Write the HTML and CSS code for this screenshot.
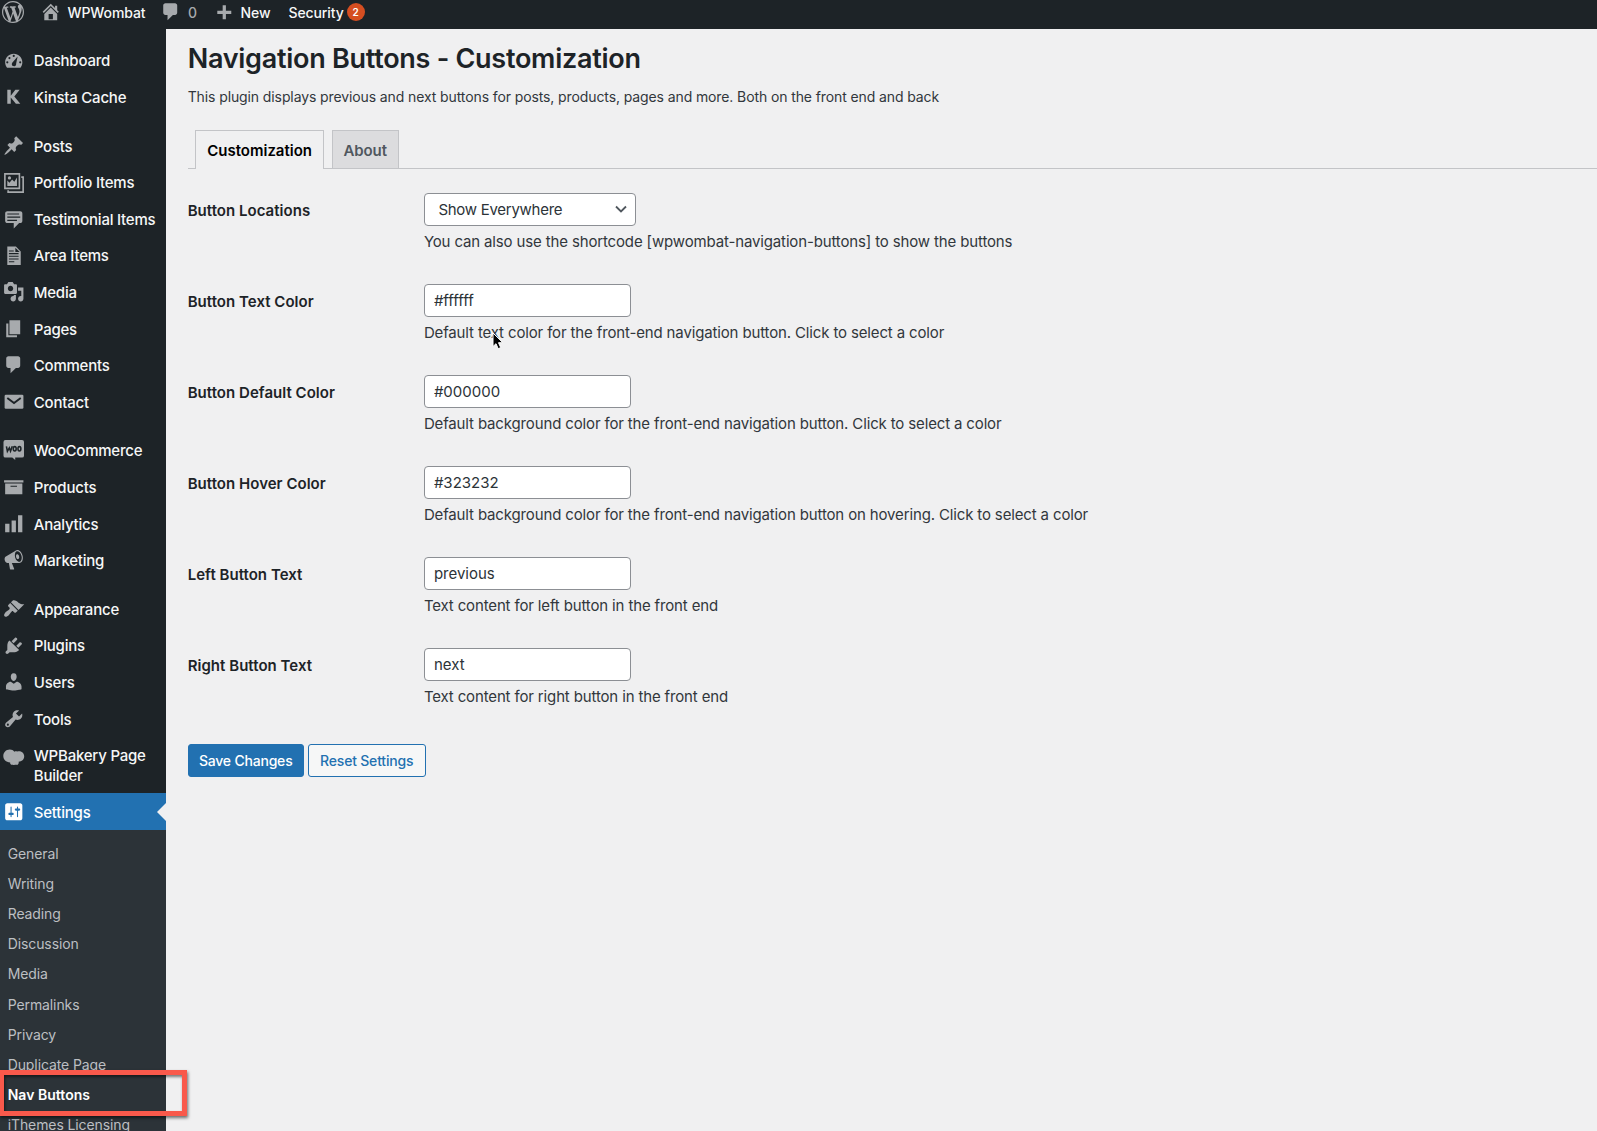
FILE: index.html
```html
<!DOCTYPE html>
<html lang="en">
<head>
<meta charset="utf-8">
<title>Navigation Buttons - Customization</title>
<link rel="stylesheet" href="styles.css">
</head>
<body>
<header class="adminbar">
  <svg class="icon wp-logo" viewBox="0 0 20 20"><path d="M20 10c0-5.51-4.49-10-10-10C4.48 0 0 4.49 0 10c0 5.52 4.48 10 10 10 5.51 0 10-4.48 10-10zM7.78 15.37L4.37 6.22c.55-.02 1.17-.08 1.17-.08.5-.06.44-1.13-.06-1.11 0 0-1.45.11-2.37.11-.18 0-.37 0-.58-.01C4.12 2.69 6.87 1.11 10 1.11c2.33 0 4.45.87 6.05 2.34-.68-.11-1.65.39-1.65 1.58 0 .74.45 1.36.9 2.1.35.61.55 1.36.55 2.46 0 1.49-1.4 5-1.4 5l-3.03-8.37c.54-.02.82-.17.82-.17.5-.05.44-1.25-.06-1.22 0 0-1.44.12-2.38.12-.87 0-2.33-.12-2.33-.12-.5-.03-.56 1.2-.06 1.22l.92.08 1.26 3.41zM17.41 10c.24-.64.74-1.87.43-4.25.7 1.29 1.05 2.71 1.05 4.25 0 3.29-1.73 6.24-4.4 7.78.97-2.59 1.94-5.2 2.92-7.78zM6.1 18.09C3.12 16.65 1.11 13.53 1.11 10c0-1.3.23-2.48.72-3.59C3.25 10.3 4.67 14.2 6.1 18.09zm4.03-6.63l2.58 6.98c-.86.29-1.76.45-2.71.45-.79 0-1.57-.11-2.29-.33.81-2.38 1.62-4.74 2.42-7.1z"/></svg>
  <a class="bar-item site"><svg class="icon" viewBox="0 0 20 20"><path d="M16 8.5l1.53 1.53-1.06 1.06L10 4.6l-6.47 6.49-1.06-1.06L10 2.5l4 4v-2h2v4zm-6-2.46l6 5.99V18H4v-5.97zM12 17v-5H8v5h4z"/></svg><span>WPWombat</span></a>
  <a class="bar-item replies"><svg class="icon" viewBox="0 0 20 20"><path d="M5 2h9c1.1 0 2 .9 2 2v7c0 1.1-.9 2-2 2h-2l-5 5v-5H5c-1.1 0-2-.9-2-2V4c0-1.1.9-2 2-2z"/></svg><span>0</span></a>
  <a class="bar-item new"><svg class="icon" viewBox="0 0 20 20"><path d="M17 9v3h-5v5H9v-5H4V9h5V4h3v5h5z"/></svg><span>New</span></a>
  <a class="bar-item security"><span>Security</span><b class="badge">2</b></a>
</header>
<div class="layout">
  <nav class="sidebar">
    <ul class="menu">
      <li><svg class="icon" viewBox="0 0 20 20"><path fill-rule="evenodd" d="M3.760 16.500h12.480c1.100-1.370 1.760-3.110 1.760-5 0-4.420-3.580-8-8-8s-8 3.580-8 8c0 1.890.66 3.630 1.760 5zM9 5.500a1 1 0 1 1 2 0 1 1 0 0 1-2 0zM5 7.500a1 1 0 1 1 2 0 1 1 0 0 1-2 0zM3 11.500a1 1 0 1 1 2 0 1 1 0 0 1-2 0zM15 11.500a1 1 0 1 1 2 0 1 1 0 0 1-2 0zM8.200 13.100c.1-.9.6-1.600 1.200-2.100l4.200-4.900-1.300 6.200c0 1.700-.4 2.400-1.300 2.800-1.400.5-3-.5-2.800-2z"/></svg><span>Dashboard</span></li>
      <li><svg class="icon" viewBox="0 0 20 20"><path d="M4 3.500h3.200v5.600L11.500 3.500h4l-5 6.200 5.600 6.900h-4.100L7.200 10.700v5.900H4z"/></svg><span>Kinsta Cache</span></li>
      <li class="group"><svg class="icon" viewBox="0 0 20 20"><path d="M10.440 3.020l1.820-1.820 6.360 6.350-1.830 1.820c-1.050-.68-2.480-.57-3.410.36l-.75.75c-.92.93-1.040 2.350-.35 3.410l-1.830 1.820-2.410-2.410-2.800 2.790c-.42.42-3.380 2.710-3.800 2.290s1.860-3.390 2.280-3.810l2.790-2.790L4.100 9.360l1.830-1.820c1.050.69 2.480.57 3.400-.36l.75-.75c.93-.92 1.050-2.350.36-3.410z"/></svg><span>Posts</span></li>
      <li><svg class="icon" viewBox="0 0 20 20"><path fill-rule="evenodd" d="M1 1h15v15H1zM2.500 2.500v12h12v-12zM17 4h2.500v15.500H4V17h1.500v1H18V5.500h-1z"/><path d="M4 13V8l2 2 2.500-3 2 2L13 5v8z"/><circle cx="6" cy="5.500" r="1.500"/></svg><span>Portfolio Items</span></li>
      <li><svg class="icon" viewBox="0 0 20 20"><path d="M4 3h12c.55 0 1.020.2 1.410.59S18 4.450 18 5v7c0 .55-.2 1.020-.59 1.410S16.550 14 16 14h-1l-5 5v-5H4c-.55 0-1.020-.2-1.410-.59S2 12.550 2 12V5c0-.55.2-1.020.59-1.410S3.450 3 4 3zm11 2H4v1h11V5zm1 3H4v1h12V8zm-3 3H4v1h9v-1z"/></svg><span>Testimonial Items</span></li>
      <li><svg class="icon" viewBox="0 0 20 20"><path fill-rule="evenodd" d="M4 1.500h8l4.500 4.500v12.500H4zM11.500 2.500V6.500H15.500zM5.500 5h4.500v1H5.500zM5.500 7.500h9v1h-9zM5.500 10h9v1h-9zM5.500 12.500h9v1h-9zM5.500 15h5v1h-5z"/></svg><span>Area Items</span></li>
      <li><svg class="icon" viewBox="0 0 20 20"><path d="M13 11V4c0-.55-.45-1-1-1h-1.670L9 1H5L3.670 3H2c-.55 0-1 .45-1 1v7c0 .55.45 1 1 1h10c.55 0 1-.45 1-1zM7 4.500c1.380 0 2.500 1.120 2.500 2.500S8.380 9.500 7 9.500 4.500 8.380 4.500 7 5.620 4.500 7 4.500zM14 6h5v10.500c0 1.380-1.120 2.500-2.500 2.500S14 17.880 14 16.500s1.120-2.500 2.500-2.500c.17 0 .34.020.5.050V9h-3V6zm-4 8.050V13h2v3.500c0 1.380-1.120 2.500-2.500 2.500S7 17.880 7 16.500 8.120 14 9.500 14c.17 0 .34.020.5.050z"/></svg><span>Media</span></li>
      <li><svg class="icon" viewBox="0 0 20 20"><path d="M6 15V2h10v13H6zm-1 1h8v2H3V5h2v11z"/></svg><span>Pages</span></li>
      <li><svg class="icon" viewBox="0 0 20 20"><path d="M5 2h9c1.100 0 2 .9 2 2v7c0 1.100-.9 2-2 2h-2l-5 5v-5H5c-1.100 0-2-.9-2-2V4c0-1.100.9-2 2-2z"/></svg><span>Comments</span></li>
      <li><svg class="icon" viewBox="0 0 20 20"><rect x="1.500" y="3.500" width="17.500" height="13" rx="1.200"/><path class="cut" d="M4 6.500l6.250 4.700 6.250-4.700"/></svg><span>Contact</span></li>
      <li class="group"><svg class="icon woo" viewBox="0 0 22 22"><path d="M2.500 0h17q2 0 2 2v14q0 2-2 2h-7v2.500L9.500 18h-7q-2 0-2-2V2q0-2 2-2z"/><path class="letters" d="M3.500 6.500l1 5 2-3.500 1.200 3.500L9.500 6.500"/><ellipse class="letters" cx="12" cy="9" rx="1.500" ry="2.200"/><ellipse class="letters" cx="16.800" cy="9" rx="1.500" ry="2.200"/></svg><span>WooCommerce</span></li>
      <li><svg class="icon" viewBox="0 0 20 20"><path d="M19 4v2H1V4h18zM2 7h16v10H2V7zm11 3V9H7v1h6z"/></svg><span>Products</span></li>
      <li><svg class="icon" viewBox="0 0 20 20"><path d="M18 18V2h-4v16h4zm-6 0V7H8v11h4zm-6 0v-8H2v8h4z"/></svg><span>Analytics</span></li>
      <li><svg class="icon" viewBox="0 0 20 20"><path d="M18.150 5.940c.46 1.620.38 3.220-.02 4.480-.42 1.280-1.260 2.180-2.300 2.480-.16.06-.26.06-.4.06-.06.02-.12.02-.18.02-.06.02-.14.02-.22.02h-6.800l2.220 5.500c.02.14-.06.26-.14.34-.08.1-.24.16-.34.16H6.950c-.1 0-.26-.06-.34-.16-.08-.08-.16-.2-.14-.34l-1-5.500H4.250l-.02-.02c-.5.06-1.080-.18-1.540-.62s-.88-1.080-1.060-1.880c-.24-.8-.2-1.560-.02-2.200.18-.62.58-1.080 1.060-1.300l.02-.02 9-5.400c.1-.06.18-.1.24-.16.06-.04.14-.08.24-.12.16-.08.28-.12.5-.18 1.040-.3 2.240.1 3.220.98s1.840 2.240 2.260 3.860zm-2.580 5.980h-.02c.4-.1.74-.34 1.040-.7.58-.7.86-1.760.86-3.040 0-.64-.1-1.300-.28-1.980-.34-1.360-1.020-2.500-1.780-3.240s-1.680-1.100-2.460-.88c-.82.22-1.400.96-1.700 2-.32 1.040-.28 2.360.06 3.720.38 1.360 1 2.500 1.800 3.240.78.74 1.620 1.100 2.480.88zm-2.540-7.080c.22-.04.42-.02.62.04.38.16.76.48 1.020 1s.42 1.200.42 1.780c0 .3-.04.56-.12.8-.18.48-.44.84-.86.94-.34.1-.8-.06-1.140-.4s-.64-.86-.78-1.500c-.18-.62-.12-1.240.02-1.720s.48-.84.82-.94z"/></svg><span>Marketing</span></li>
      <li class="group"><svg class="icon" viewBox="0 0 20 20"><path d="M14.480 11.060L7.410 3.990l1.500-1.500c.5-.56 2.300-.47 3.510.32 1.210.8 1.430 1.280 2.910 2.100 1.180.64 2.450 1.260 4.450.85zm-.71.71L6.700 4.700 4.930 6.470c-.39.39-.39 1.020 0 1.410l1.060 1.060c.39.39.39 1.030 0 1.420-.6.6-1.430 1.110-2.210 1.690-.35.26-.7.53-1.010.84C1.430 14.230.4 16.080 1.400 17.070c.99 1 2.840-.03 4.180-1.360.31-.31.58-.66.85-1.020.57-.78 1.080-1.610 1.690-2.210.39-.39 1.020-.39 1.410 0l1.060 1.060c.39.39 1.020.39 1.410 0z"/></svg><span>Appearance</span></li>
      <li><svg class="icon" viewBox="0 0 20 20"><path d="M13.110 4.360L9.870 7.600 8 5.730l3.240-3.240c.35-.34 1.050-.2 1.560.32.52.51.66 1.210.31 1.550zm-8 1.770l.91-1.120 9.010 9.010-1.190.84c-.71.71-2.630 1.160-3.820 1.160H6.140L4.900 17.260c-.59.59-1.540.59-2.120 0-.59-.58-.59-1.530 0-2.120l1.240-1.240v-3.880c0-1.130.4-3.190 1.090-3.890zm7.260 3.970l3.240-3.240c.34-.35 1.040-.21 1.550.31.52.51.66 1.210.31 1.550l-3.240 3.250z"/></svg><span>Plugins</span></li>
      <li><svg class="icon" viewBox="0 0 20 20"><path d="M10 9.250c-2.270 0-2.730-3.440-2.730-3.440C7 4.020 7.820 2 9.970 2c2.160 0 2.980 2.020 2.710 3.810 0 0-.41 3.440-2.680 3.440zm0 2.570L12.720 10c2.390 0 4.520 2.330 4.520 4.530v2.490s-3.650 1.130-7.240 1.130c-3.650 0-7.240-1.130-7.240-1.130v-2.490c0-2.250 1.940-4.480 4.470-4.480z"/></svg><span>Users</span></li>
      <li><svg class="icon" viewBox="0 0 20 20"><path d="M16.680 9.770c-1.340 1.340-3.300 1.670-4.950.99l-5.410 6.520c-.99.99-2.590.99-3.580 0s-.99-2.590 0-3.570l6.520-5.420c-.68-1.650-.35-3.610.99-4.950 1.280-1.280 3.120-1.620 4.720-1.060l-2.890 2.890 2.820 2.820 2.860-2.870c.53 1.580.18 3.390-1.080 4.650zM3.810 16.210c.4.39 1.040.39 1.430 0 .4-.4.4-1.040 0-1.430-.39-.4-1.030-.4-1.430 0-.39.39-.39 1.030 0 1.430z"/></svg><span>Tools</span></li>
      <li class="double"><svg class="icon bakery" viewBox="0 0 22 22"><path d="M7 3.500c2 0 3.600.8 4.600 2.300 1-.6 2-.5 2.900-.1C17.500 4.500 21.700 6.500 21.700 10.500c0 3.600-2.600 5.500-5.700 5.500.4 1.700-.3 3-1.500 3.500-1.300-.8-3.200.6-4.500-.4-1.400.6-2.800-.4-2.700-2.200C3 16.500.3 13.700.3 10.200.3 6.500 3 3.500 7 3.500z"/></svg><span>WPBakery Page Builder</span></li>
      <li class="current"><svg class="icon" viewBox="0 0 20 20"><path d="M18 16V4c0-1.100-.9-2-2-2H4c-1.100 0-2 .9-2 2v12c0 1.100.9 2 2 2h12c1.100 0 2-.9 2-2zM8 11h1c.55 0 1 .45 1 1s-.45 1-1 1H8v1.500c0 .28-.22.5-.5.5s-.5-.22-.5-.5V13H6c-.55 0-1-.45-1-1s.45-1 1-1h1V5.500c0-.28.22-.5.5-.5s.5.22.5.5V11zm5-2h-1c-.55 0-1-.45-1-1s.45-1 1-1h1V5.500c0-.28.22-.5.5-.5s.5.22.5.5V7h1c.55 0 1 .45 1 1s-.45 1-1 1h-1v5.500c0 .28-.22.5-.5.5s-.5-.22-.5-.5V9z"/></svg><span>Settings</span></li>
    </ul>
    <ul class="submenu">
      <li>General</li>
      <li>Writing</li>
      <li>Reading</li>
      <li>Discussion</li>
      <li>Media</li>
      <li>Permalinks</li>
      <li>Privacy</li>
      <li>Duplicate Page</li>
      <li class="active">Nav Buttons<i class="highlight"></i></li>
      <li>iThemes Licensing</li>
    </ul>
  </nav>
  <main class="content">
    <h1>Navigation Buttons - Customization</h1>
    <p class="intro">This plugin displays previous and next buttons for posts, products, pages and more. Both on the front end and back</p>
    <div class="tabs">
      <a class="tab selected">Customization</a>
      <a class="tab">About</a>
    </div>
    <form class="settings">
      <div class="field">
        <label>Button Locations</label>
        <div><div class="control select"><span>Show Everywhere</span><svg viewBox="0 0 12 8"><path d="M1 1.500l5 5 5-5"/></svg></div><p>You can also use the shortcode [wpwombat-navigation-buttons] to show the buttons</p></div>
      </div>
      <div class="field">
        <label>Button Text Color</label>
        <div><input class="control" type="text" value="#ffffff"><p>Default text color for the front-end navigation button. Click to select a color</p></div>
        <svg class="cursor" viewBox="0 0 12 18"><path d="M1 1v13.500l3-2.800 2.200 5 2.500-1.100-2.200-4.900h4.300z"/></svg>
      </div>
      <div class="field">
        <label>Button Default Color</label>
        <div><input class="control" type="text" value="#000000"><p>Default background color for the front-end navigation button. Click to select a color</p></div>
      </div>
      <div class="field">
        <label>Button Hover Color</label>
        <div><input class="control" type="text" value="#323232"><p>Default background color for the front-end navigation button on hovering. Click to select a color</p></div>
      </div>
      <div class="field">
        <label>Left Button Text</label>
        <div><input class="control" type="text" value="previous"><p>Text content for left button in the front end</p></div>
      </div>
      <div class="field">
        <label>Right Button Text</label>
        <div><input class="control" type="text" value="next"><p>Text content for right button in the front end</p></div>
      </div>
      <div class="actions">
        <button class="primary" type="button">Save Changes</button>
        <button class="secondary" type="button">Reset Settings</button>
      </div>
    </form>
  </main>
</div>
</body>
</html>
```
FILE: styles.css
```css
* { box-sizing: border-box; }
body {
  margin: 0;
  height: 1131px;
  overflow: hidden;
  background: #f0f0f1;
  color: #32373c;
  font-family: Inter, "Liberation Sans", sans-serif;
  font-size: 15px;
}
ul { list-style: none; margin: 0; padding: 0; }
h1, p { margin: 0; }
.icon { width: 21.5px; height: 21.5px; flex: none; fill: #a7aaad; }

.adminbar {
  display: flex;
  align-items: center;
  height: 29px;
  padding: 0 0 5px 2px;
  background: #1d2327;
  color: #f6f7f7;
  font-size: 14px;
  font-weight: 450;
  letter-spacing: -0.1px;
}
.bar-item { display: flex; align-items: center; }
.wp-logo { width: 22px; height: 22px; }
.site { margin-left: 16px; }
.site span { margin-left: 6px; width: 76px; }
.replies { margin-left: 16px; }
.replies span { margin-left: 7px; width: 8px; color: #a7aaad; }
.new { margin-left: 17px; }
.new span { margin-left: 6px; width: 28px; }
.security { margin-left: 20px; }
.security span { width: 54px; }
.badge {
  margin-left: 4px;
  width: 18px;
  height: 18px;
  border-radius: 50%;
  background: #d54e21;
  color: #fff;
  font-size: 10px;
  font-weight: 600;
  line-height: 18px;
  text-align: center;
}

.layout { display: flex; height: 1102px; }
.sidebar {
  flex: none;
  width: 166px;
  padding-top: 13.2px;
  background: #1d2327;
  color: #f6f7f7;
}
.menu li {
  display: flex;
  align-items: center;
  gap: 9px;
  height: 36.6px;
  padding-left: 3.3px;
  line-height: 20px;
  font-weight: 450;
  letter-spacing: -0.22px;
}
.menu span { padding-top: 2px; }
.menu .group { margin-top: 12px; }
.menu .double { height: 56.5px; }
.menu .double .icon { align-self: flex-start; margin-top: 9px; }
.menu .double span { width: 120px; }
.menu .current { position: relative; background: #2271b1; color: #fff; }
.menu .current .icon { fill: #fff; }
.current::after {
  content: "";
  position: absolute;
  right: 0;
  top: 9.5px;
  border: 9px solid transparent;
  border-left: 0;
  border-right-color: #f0f0f1;
}
.cut { fill: none; stroke: #1d2327; stroke-width: 1.8; }
.letters { fill: none; stroke: #1d2327; stroke-width: 1.6; }

.submenu {
  height: 302px;
  padding: 8.6px 0 0 7.7px;
  background: #2c3338;
  color: #bcbfc2;
  font-size: 14px;
  line-height: 30.2px;
  letter-spacing: -0.1px;
  white-space: nowrap;
}
.submenu li { height: 30.2px; }
.submenu .active { position: relative; color: #fff; font-weight: 600; letter-spacing: 0.02px; }
.highlight {
  position: absolute;
  left: -9px;
  top: -9.6px;
  width: 188px;
  height: 46px;
  border: 5px solid #f9594b;
  box-shadow: 1px 2px 3px rgba(0, 0, 0, .55), inset 1px 2px 3px rgba(0, 0, 0, .5);
}

.content { flex: 1; padding: 14px 0 0 21.7px; }
h1 {
  color: #1d2327;
  font-size: 27px;
  font-weight: 600;
  line-height: 32px;
  letter-spacing: -0.27px;
}
.intro { margin-top: 12px; font-size: 14px; line-height: 20px; letter-spacing: -0.107px; }
.tabs {
  display: flex;
  gap: 7.5px;
  height: 39px;
  margin-top: 23px;
  padding-left: 7.5px;
  border-bottom: 1px solid #c3c4c7;
}
.tab {
  height: 38px;
  padding: 0 11px;
  border: 1px solid #c3c4c7;
  border-bottom: 0;
  background: #dcdcde;
  color: #50575e;
  font-weight: 600;
  line-height: 39px;
}
.tab + .tab { letter-spacing: -0.1px; }
.tab.selected { height: 39px; background: #f0f0f1; color: #000; }
.settings { padding-top: 24px; }
.field {
  position: relative;
  display: grid;
  grid-template-columns: 236.2px 1fr;
  height: 91.1px;
}
.field label { padding-top: 9px; color: #1d2327; font-weight: 600; line-height: 18px; letter-spacing: 0.03px; }
.control {
  display: block;
  width: 207.5px;
  height: 32.5px;
  padding: 0 9px;
  border: 1px solid #8c8f94;
  border-radius: 4px;
  background: #fff;
  color: #2c3338;
  font: inherit;
}
.select { display: flex; align-items: center; justify-content: space-between; width: 212.5px; padding: 0 8px 0 13.5px; letter-spacing: -0.27px; }
.select svg { width: 12px; height: 8px; fill: none; stroke: #50575e; stroke-width: 1.8; }
.field p { margin-top: 5px; line-height: 21px; letter-spacing: -0.143px; white-space: nowrap; }
.cursor { position: absolute; left: 304px; top: 47.5px; width: 12px; height: 18px; fill: #000; stroke: #fff; stroke-width: 1; }
.actions { display: flex; gap: 4px; margin-top: 4.5px; }
.actions button {
  height: 32.5px;
  padding: 0;
  border: 1px solid #2271b1;
  border-radius: 3px;
  font: 450 14px Inter, "Liberation Sans", sans-serif;
  letter-spacing: -0.2px;
}
.primary { width: 116px; background: #2271b1; color: #fff; }
.secondary { width: 118px; background: #f6f7f7; color: #2271b1; }
```
